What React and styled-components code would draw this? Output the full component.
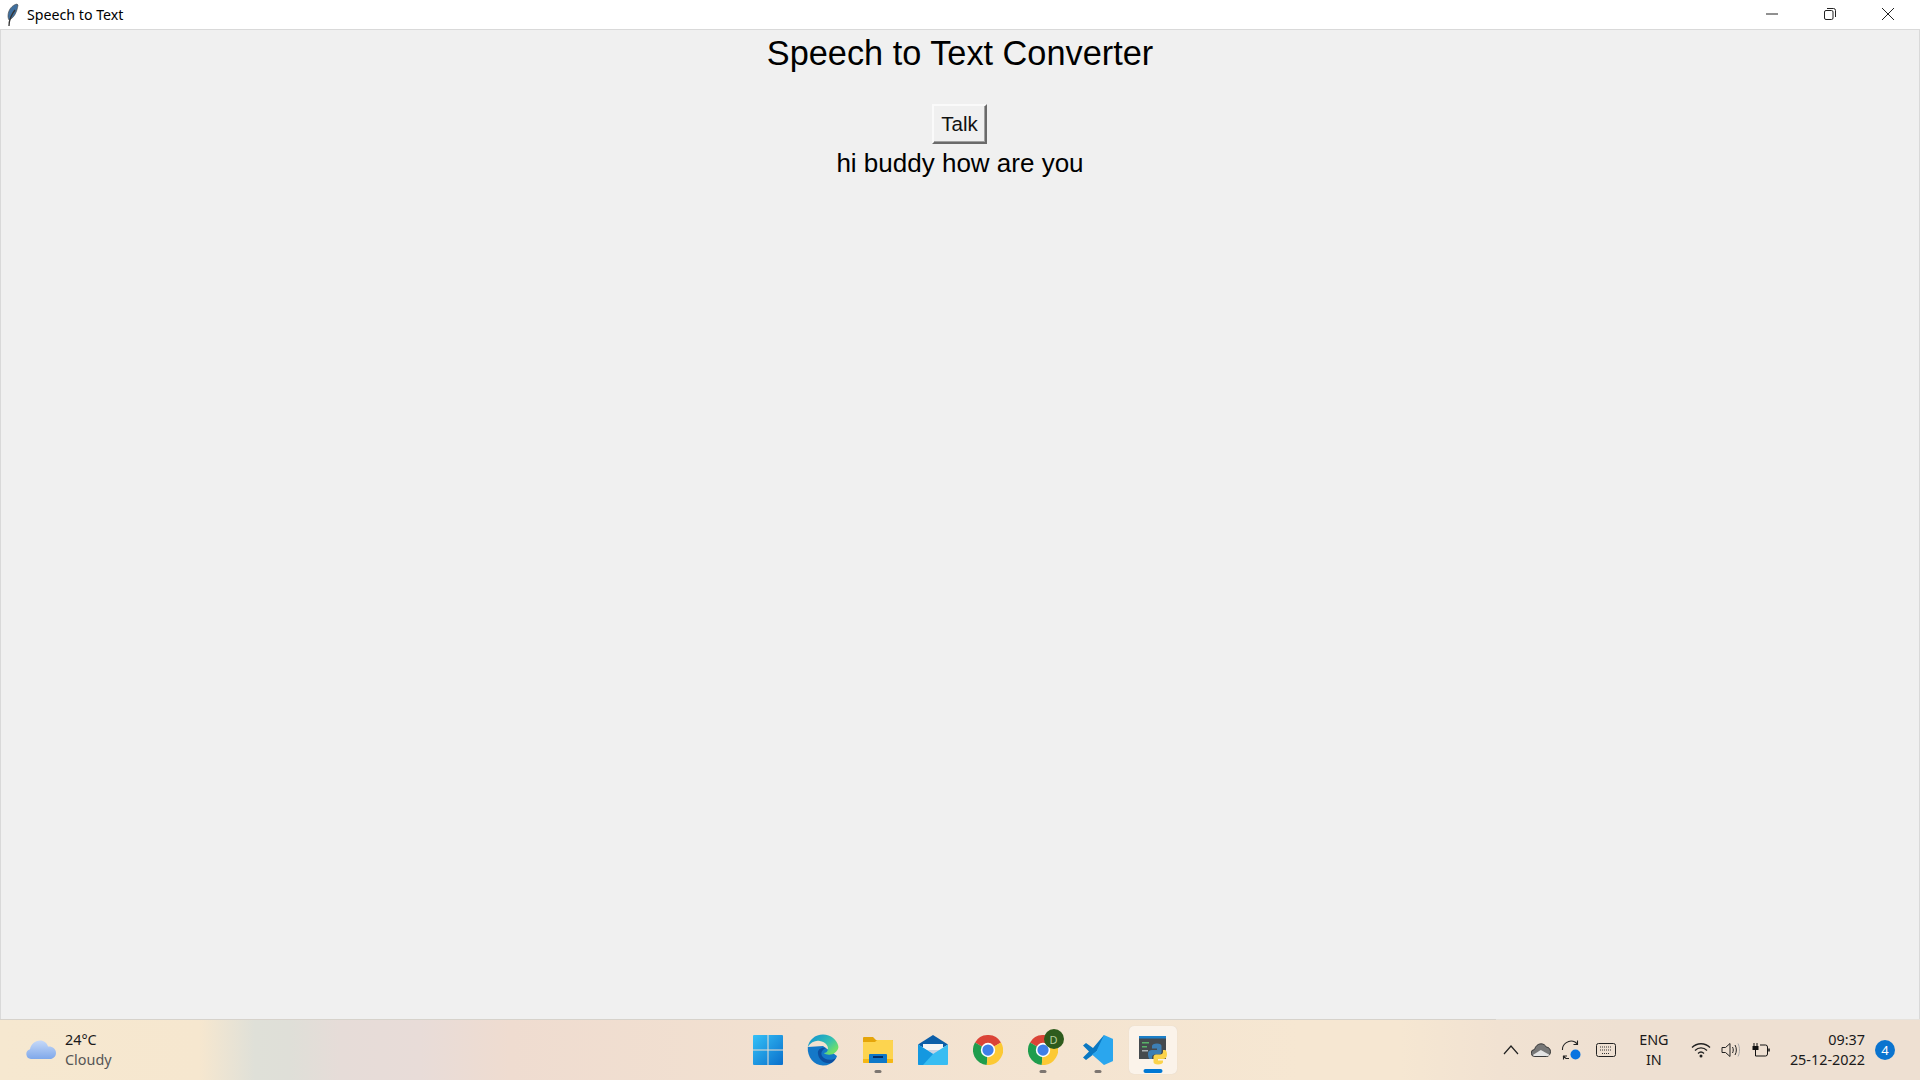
import React from 'react';
import styled, { createGlobalStyle } from 'styled-components';

const GlobalStyle = createGlobalStyle`
    html, body {
        margin: 0;
        padding: 0;
        height: 100%;
        overflow: hidden;
    }
    #root {
        height: 100%;
    }
`

const Screen = styled.div`
    width: 1920px;
    height: 1080px;
    display: flex;
    flex-direction: column;
    font-family: "Liberation Sans", Arial, sans-serif;
`

const TitleBar = styled.div`
    box-sizing: border-box;
    height: 30px;
    flex: none;
    background-color: #fff;
    border-bottom: 1px solid #d9d9d9;
    display: flex;
    align-items: center;
`

const AppName = styled.span`
    font-family: "Noto Sans", sans-serif;
    font-size: 14.2px;
    color: #000;
    margin-left: 7px;
    margin-bottom: 1px;
`

const Feather = styled.svg`
    width: 14px;
    height: 24px;
    margin-left: 6px;
`

const WindowButtons = styled.div`
    margin-left: auto;
    margin-right: 3px;
    margin-bottom: 2px;
    display: flex;
`

const WindowButton = styled.div`
    width: 58px;
    height: 27px;
    display: flex;
    align-items: center;
    justify-content: center;
`

const AppBody = styled.main`
    box-sizing: border-box;
    flex: 1;
    background-color: #f0f0f0;
    border-left: 1px solid #d9d9d9;
    border-right: 1px solid #d9d9d9;
    display: flex;
    flex-direction: column;
    align-items: center;
`

const Heading = styled.h1`
    margin: 3px 0 0;
    font-size: 34.3px;
    font-weight: 400;
    line-height: 40px;
    color: #000;
`

const TalkButton = styled.button`
    box-sizing: border-box;
    margin-top: 31px;
    margin-right: 1px;
    width: 55px;
    height: 40px;
    padding: 0;
    font-family: inherit;
    font-size: 20.5px;
    color: #111;
    background-color: #f0f0f0;
    border-style: solid;
    border-width: 2px;
    border-color: #fafafa #6a6a6a #6a6a6a #fafafa;
    box-shadow: inset -1px -1px 0 #a0a0a0;
`

const Result = styled.p`
    margin: 4px 0 0;
    font-size: 26px;
    line-height: 30px;
    color: #000;
`

const TaskBarEdge = styled.div`
    height: 1px;
    flex: none;
    background: linear-gradient(90deg, #d6d2cb 0, #d6d2cb 1496px, #e6e2dc 1496px, #e6e2dc 1920px);
`

const TaskBar = styled.footer`
    height: 60px;
    flex: none;
    display: grid;
    grid-template-columns: 1fr auto 1fr;
    align-items: center;
    background: linear-gradient(90deg, #f6e8d0 0, #f6e7cf 200px, #dfe0d8 255px, #dfdfd8 290px, #e6dcd8 340px, #e8dcd8 420px, #efdcd0 510px, #f2e1d0 800px, #f6e7d2 1300px, #f6e7d2 1400px, #f1e2d2 1500px, #eee0d2 1620px, #eee0d2 1920px);
    font-family: "Noto Sans", sans-serif;
`

const Weather = styled.div`
    display: flex;
    align-items: center;
    padding-left: 26px;
    gap: 9px;
`

const WeatherText = styled.div`
    display: flex;
    flex-direction: column;
    font-size: 14.4px;
    line-height: 20px;
    color: #1a1a1a;
`

const Muted = styled.span`
    color: #555;
`

const Apps = styled.div`
    display: flex;
    align-items: center;
    gap: 7px;
`

const AppSlot = styled.div`
    position: relative;
    width: 48px;
    height: 48px;
    display: flex;
    align-items: center;
    justify-content: center;
    border-radius: 5px;
    background-color: ${p => (p.$active ? '#fbf3ea' : 'transparent')};
    box-shadow: ${p => (p.$active ? '0 0 1px #d8cfc5' : 'none')};
`

const Running = styled.span`
    position: absolute;
    left: 50%;
    bottom: 1px;
    transform: translateX(-50%);
    width: ${p => (p.$active ? 19 : 7)}px;
    height: ${p => (p.$active ? 4 : 3)}px;
    border-radius: 2px;
    background-color: ${p => (p.$active ? '#0078d4' : '#7d7671')};
`

const Badge = styled.span`
    position: absolute;
    top: 3px;
    right: 3px;
    width: 20px;
    height: 20px;
    border-radius: 50%;
    background-color: #2e5b1d;
    color: #b8cc9c;
    font-size: 11px;
    display: flex;
    align-items: center;
    justify-content: center;
`

const Tray = styled.div`
    display: flex;
    align-items: center;
    justify-content: flex-end;
    height: 100%;
`

const TrayIcon = styled.svg`
    display: block;
    flex: none;
    margin-left: ${p => p.$gap || 0}px;
`

const Lang = styled.div`
    width: 36px;
    margin-left: 20px;
    text-align: center;
    font-size: 14.4px;
    line-height: 20px;
    color: #1a1a1a;
`

const Clock = styled.div`
    margin-left: 19px;
    text-align: right;
    font-size: 14.4px;
    line-height: 20px;
    color: #1a1a1a;
`

const Notify = styled.span`
    width: 20px;
    height: 20px;
    margin: 0 25px 0 10px;
    border-radius: 50%;
    background-color: #0a74cf;
    color: #fff;
    font-size: 13px;
    display: flex;
    align-items: center;
    justify-content: center;
`

const StartIcon = () => (
    <svg width="30" height="30" viewBox="0 0 30 30">
        <defs>
            <linearGradient id="st" x1="0" y1="0" x2="1" y2="1">
                <stop offset="0" stopColor="#35c1f7" />
                <stop offset="1" stopColor="#0a6fcb" />
            </linearGradient>
        </defs>
        <path fill="url(#st)" d="M0 1a1 1 0 0 1 1-1h13.500v14.500H0zM15.500 0H29a1 1 0 0 1 1 1v13.500H15.500zM0 15.500h14.500V30H1a1 1 0 0 1-1-1zM15.500 15.500H30V29a1 1 0 0 1-1 1H15.500z" />
    </svg>
)

const EdgeIcon = () => (
    <svg width="32" height="32" viewBox="0 0 32 32">
        <defs>
            <linearGradient id="eg" x1="0.2" y1="0" x2="1" y2="0.6">
                <stop offset="0" stopColor="#1598d0" />
                <stop offset="0.6" stopColor="#35c1b0" />
                <stop offset="1" stopColor="#6ede6a" />
            </linearGradient>
        </defs>
        <path fill="#1478c8" d="M.8 13C0 23 7 31.500 16 31.500c5 0 9-2 12-6 1-1 1.500-2 2-3.500L16 12z" />
        <path fill="url(#eg)" d="M16 .5C8 .5 2 6 .8 13c3-5 8-7 12-6 6 1 9 5 8 9-.5 2-2 3-4 3 2 2 8 3 12-1 2-2 3-4 2.500-6C30 6 24 .5 16 .5z" />
        <path fill="#0c4fa0" d="M11 20c1 6 6 10 13 9 2-1 4-3 5-5-4 3-12 2-14-2-1-2-1-4 1-6 1-1 2-2 3-2-4-1-9 1-8 6z" />
    </svg>
)

const FolderIcon = () => (
    <svg width="30" height="26" viewBox="0 0 30 26">
        <path fill="#e5a50a" d="M0 1a1 1 0 0 1 1-1h9l3 3h16a1 1 0 0 1 1 1v4H0z" />
        <path fill="#fdd44f" d="M0 5h12l2-2h15a1 1 0 0 1 1 1v21a1 1 0 0 1-1 1H1a1 1 0 0 1-1-1z" />
        <path fill="#f5b815" d="M0 22h30v3a1 1 0 0 1-1 1H1a1 1 0 0 1-1-1z" />
        <path fill="#0f78c8" d="M6 18a1 1 0 0 1 1-1h16a1 1 0 0 1 1 1v8H6z" />
        <rect x="10" y="19" width="10" height="2" fill="#062f66" />
    </svg>
)

const MailIcon = () => (
    <svg width="30" height="30" viewBox="0 0 30 30">
        <path fill="#0b5ea8" d="M15 0 30 9.500 26 12H4L0 9.500z" />
        <path fill="#f4f4f4" d="M5 9h20v9H5z" />
        <path fill="#c8d4e4" d="M5 15h20l-10 5z" />
        <path fill="#38bdf2" d="M0 9.500l15 9.500 15-9.500V29a1 1 0 0 1-1 1H1a1 1 0 0 1-1-1z" />
        <path fill="#1498e0" d="M0 29V9.500l15 9.500L5 30H1a1 1 0 0 1-1-1z" />
    </svg>
)

const ChromeIcon = () => (
    <svg width="30" height="30" viewBox="0 0 48 48">
        <path fill="#db4437" d="M24 24 3.200 12A24 24 0 0 1 44.800 12z" />
        <path fill="#1f9d4d" d="M24 24 3.200 12A24 24 0 0 0 22 48z" />
        <path fill="#fcc934" d="M24 24 22 48A24 24 0 0 0 44.800 12z" />
        <circle cx="24" cy="24" r="11.500" fill="#fff" />
        <circle cx="24" cy="24" r="9" fill="#3f7fe8" />
    </svg>
)

const CodeIcon = () => (
    <svg width="30" height="30" viewBox="0 0 30 30">
        <path fill="#0a78c2" d="M0 10.500 3 8l7 5 11-13-.5 10L9 20.500 3 25l-3-2.500L6 16.500z" />
        <path fill="#2aa6ee" d="M21 0l8 3.500a1 1 0 0 1 1 1V25.500a1 1 0 0 1-1 1L21 30 9 19.500l12-9V20l-7-5z" />
    </svg>
)

const PythonAppIcon = () => (
    <svg width="28" height="29" viewBox="0 0 28 29">
        <rect x="0" y="0" width="27" height="23" fill="#454a4e" />
        <rect x="0" y="0" width="27" height="2.500" fill="#1c7fc8" />
        <rect x="3" y="6" width="7" height="1.500" fill="#58b368" />
        <rect x="3" y="10" width="5" height="1.500" fill="#58b368" />
        <rect x="3" y="14" width="6" height="1.500" fill="#aab0b4" />
        <path fill="#3d7fb5" d="M9 18c0-3 1.500-4 4-4h5v-1.500h-5V10c0-1.500 2-2.500 5-2.500s4.500 1 4.500 2.500v6c0 1.500-1 2.500-2.500 2.500h-4c-2 0-3 1-3 3V23h-2C10 23 9 21 9 18z" />
        <path fill="#fbd34b" d="M28 18.500c0 3-1.500 4.500-4 4.500h-5v1.500h5V26c0 1.500-2 2.500-5 2.500S14.500 27.500 14.500 26v-5c0-1.500 1-2.500 2.500-2.500h4c2 0 3-1 3-3V14h2c1 0 2 2 2 4.500z" />
    </svg>
)

const App = () => {
    return (
        <Screen>
            <GlobalStyle />
            <TitleBar>
                <Feather viewBox="0 0 14 24">
                    <path fill="#3f6f9e" d="M11 1C6 2 2 7 2 13c0 2 .5 3 1 4 5-2 8-8 9-15z" stroke="#444" strokeWidth=".6" />
                    <path fill="none" stroke="#333" strokeWidth="1.300" d="M3 23c0-5 2-11 6-16" />
                </Feather>
                <AppName>Speech to Text</AppName>
                <WindowButtons>
                    <WindowButton>
                        <svg width="14" height="14" viewBox="0 0 14 14">
                            <path d="M1 7h12" stroke="#222" fill="none" />
                        </svg>
                    </WindowButton>
                    <WindowButton>
                        <svg width="14" height="14" viewBox="0 0 14 14">
                            <rect x="1.500" y="3.500" width="8.500" height="9" rx="1.500" stroke="#222" fill="none" />
                            <path d="M4 1.500h6.500a2 2 0 0 1 2 2V10" stroke="#222" fill="none" />
                        </svg>
                    </WindowButton>
                    <WindowButton>
                        <svg width="14" height="14" viewBox="0 0 14 14">
                            <path d="M1 1l12 12M13 1L1 13" stroke="#222" fill="none" />
                        </svg>
                    </WindowButton>
                </WindowButtons>
            </TitleBar>
            <AppBody>
                <Heading>Speech to Text Converter</Heading>
                <TalkButton>Talk</TalkButton>
                <Result>hi buddy how are you</Result>
            </AppBody>
            <TaskBarEdge />
            <TaskBar>
                <Weather>
                    <svg width="30" height="20" viewBox="0 0 30 20">
                        <defs>
                            <linearGradient id="cl" x1="0" y1="0" x2="0" y2="1">
                                <stop offset="0" stopColor="#c6d9f8" />
                                <stop offset="1" stopColor="#7fa8ea" />
                            </linearGradient>
                        </defs>
                        <path fill="url(#cl)" d="M5 19a5 5 0 0 1-1-9.800C5 4 9 .5 14 .5c4 0 7 2.500 8 6 4-.5 8 2 8 6.500 0 3.500-3 6-6 6z" />
                    </svg>
                    <WeatherText>
                        <span>24°C</span>
                        <Muted>Cloudy</Muted>
                    </WeatherText>
                </Weather>
                <Apps>
                    <AppSlot><StartIcon /></AppSlot>
                    <AppSlot><EdgeIcon /></AppSlot>
                    <AppSlot><FolderIcon /><Running /></AppSlot>
                    <AppSlot><MailIcon /></AppSlot>
                    <AppSlot><ChromeIcon /></AppSlot>
                    <AppSlot><ChromeIcon /><Badge>D</Badge><Running /></AppSlot>
                    <AppSlot><CodeIcon /><Running /></AppSlot>
                    <AppSlot $active><PythonAppIcon /><Running $active /></AppSlot>
                </Apps>
                <Tray>
                    <TrayIcon width="16" height="10" viewBox="0 0 16 10">
                        <path d="M1 9l7-8 7 8" stroke="#222" fill="none" strokeWidth="1.200" />
                    </TrayIcon>
                    <TrayIcon $gap={12} width="20" height="14" viewBox="0 0 20 14">
                        <path fill="#777" stroke="#3a3a3a" strokeWidth="1" d="M4 13.500a3.500 3.500 0 0 1-.5-7C4.500 3 7 .8 10 .8c2.500 0 4.300 1.300 5.300 3.300 2.500 0 4.200 2 4.200 4.700 0 2.500-1.800 4.700-4 4.700z" />
                        <path fill="#e4e4e4" d="M1.800 12l8-5 9 5c-.8 .8-2 1-3 1H4c-1 0-1.700-.2-2.200-1z" />
                    </TrayIcon>
                    <TrayIcon $gap={10} width="20" height="20" viewBox="0 0 20 20">
                        <path d="M1.500 10C1 4 8 -1 14 2l2.500 2M16.500 .5v4H12.500M8 18.500H5L2 16M2.500 19.500V16h3.500" stroke="#222" fill="none" strokeWidth="1.100" />
                        <circle cx="14.500" cy="14.500" r="5" fill="#0a74e0" />
                    </TrayIcon>
                    <TrayIcon $gap={15} width="20" height="14" viewBox="0 0 20 14">
                        <rect x="0.500" y="0.500" width="19" height="13" rx="2" stroke="#222" fill="none" />
                        <path d="M4 4h12M4 7h12M6 10.500h8" stroke="#333" strokeDasharray="1 1" fill="none" />
                    </TrayIcon>
                    <Lang>ENG<br />IN</Lang>
                    <TrayIcon $gap={19} width="20" height="16" viewBox="0 0 20 16">
                        <path d="M1 5.500c5-5 13-5 18 0M4 8.500c3.500-3.500 8.500-3.500 12 0M7 11.500c2-2 4-2 6 0" stroke="#222" fill="none" strokeWidth="1.300" />
                        <circle cx="10" cy="14" r="1.500" fill="#222" />
                    </TrayIcon>
                    <TrayIcon $gap={10} width="20" height="16" viewBox="0 0 20 16">
                        <path d="M1 5.500h3.500L9 1.500v13l-4.500-4H1z" stroke="#222" fill="none" />
                        <path d="M11.500 5c1 2 1 4 0 6M14 3c1.800 3 1.800 7 0 10" stroke="#222" fill="none" />
                        <path d="M17 1.500c2 4 2 9 0 13" stroke="#aaa" fill="none" />
                    </TrayIcon>
                    <TrayIcon $gap={10} width="20" height="16" viewBox="0 0 20 16">
                        <path d="M3 1v3M6 1v3" stroke="#111" fill="none" />
                        <rect x="1.500" y="4" width="6" height="4" fill="#111" />
                        <path d="M4.500 8v6h10a2 2 0 0 0 2-2V5a2 2 0 0 0-2-2H9" stroke="#111" fill="none" />
                        <path d="M18 6.500v3" stroke="#111" fill="none" strokeWidth="1.500" />
                    </TrayIcon>
                    <Clock>09:37<br />25-12-2022</Clock>
                    <Notify>4</Notify>
                </Tray>
            </TaskBar>
        </Screen>
    );
}

export default App;
